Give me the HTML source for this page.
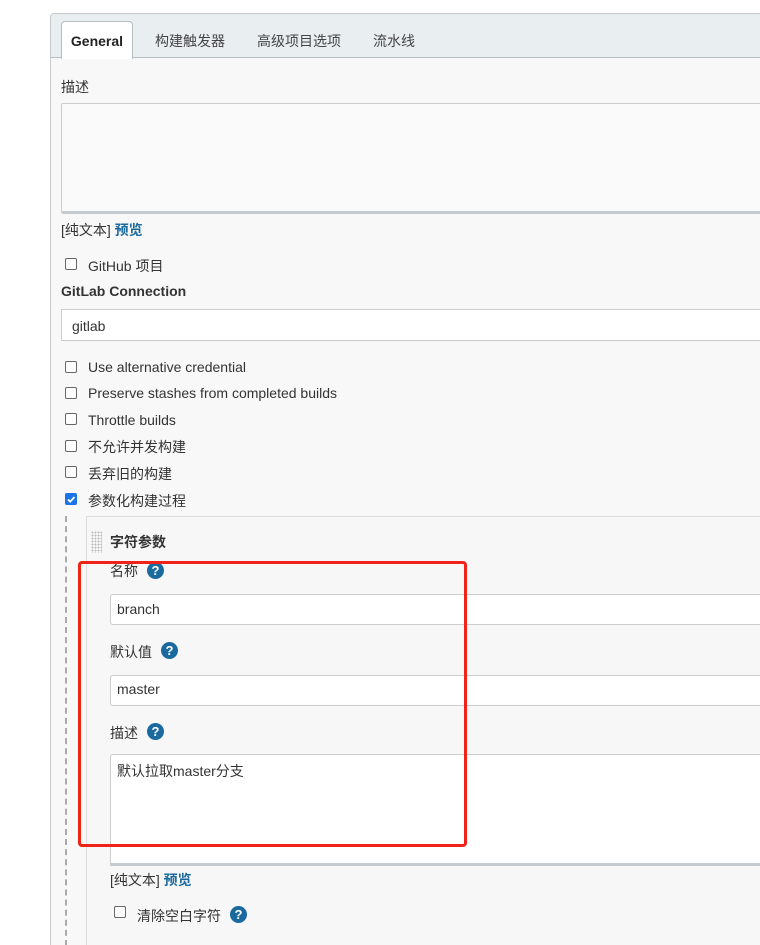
<!DOCTYPE html>
<html><head><meta charset="utf-8"><style>
*{box-sizing:border-box}
html,body{margin:0;width:760px;height:945px;overflow:hidden}
body{position:relative;background:#fff;font-family:"Liberation Sans","Noto Sans CJK SC",sans-serif;font-size:14px;color:#333}
.a{position:absolute}
.panel{position:absolute;left:50px;top:13px;width:740px;height:960px;border:1px solid #c8c8c8;border-radius:4px;background:#f8f8f8}
.tabs{position:absolute;left:0;top:0;right:0;height:44px;background:#e9eef1;border-bottom:1px solid #b8bcc0;border-radius:4px 4px 0 0}
.tab{position:absolute;top:17px;font-size:14px;color:#444}
.tabA{position:absolute;left:10px;top:7px;width:72px;height:38px;background:#fff;border:1px solid #b8bcc0;border-bottom:none;border-radius:4px 4px 0 0;font-weight:bold;text-align:center;line-height:38px;color:#222;font-size:14px}
.cb{position:absolute;width:12px;height:12px;border:1px solid #666;border-radius:2px;background:#fff}
.cb.on{background:#1a73e8;border-color:#1a73e8}
.lbl{position:absolute;font-size:14px;color:#333;white-space:nowrap}
.inp{position:absolute;background:#fff;border:1px solid #ccc;border-radius:3px}
.h{position:absolute;width:17px;height:17px;border-radius:50%;background:#1a6aa0;color:#fff;font-weight:bold;font-size:13px;text-align:center;line-height:17px}
.blue{color:#1a6aa0;font-weight:bold}
</style></head><body>
<div class="panel"><div class="tabs"></div><div class="tabA">General</div>
<div class="tab" style="left:104px">构建触发器</div><div class="tab" style="left:206px">高级项目选项</div><div class="tab" style="left:322px">流水线</div></div>
<div class="lbl" style="left:61px;top:77px">描述</div>
<div class="inp" style="left:61px;top:103px;width:710px;height:111px;background:#fafafa;border-radius:2px;border-bottom:3px solid #c6cbcf"></div>
<div class="lbl" style="left:61px;top:220px">[纯文本] <span class="blue">预览</span></div>
<div class="cb" style="left:65px;top:258px"></div><div class="lbl" style="left:88px;top:256px">GitHub 项目</div>
<div class="lbl" style="left:61px;top:283px;font-weight:bold">GitLab Connection</div>
<div class="inp" style="left:61px;top:309px;width:710px;height:32px;border-radius:0"></div>
<div class="lbl" style="left:72px;top:318px">gitlab</div>
<div class="cb" style="left:65px;top:361px"></div><div class="lbl" style="left:88px;top:359px">Use alternative credential</div>
<div class="cb" style="left:65px;top:387px"></div><div class="lbl" style="left:88px;top:385px">Preserve stashes from completed builds</div>
<div class="cb" style="left:65px;top:413px"></div><div class="lbl" style="left:88px;top:412px">Throttle builds</div>
<div class="cb" style="left:65px;top:440px"></div><div class="lbl" style="left:88px;top:437px">不允许并发构建</div>
<div class="cb" style="left:65px;top:466px"></div><div class="lbl" style="left:88px;top:464px">丢弃旧的构建</div>
<div class="cb on" style="left:65px;top:493px"><svg width="12" height="12" style="position:absolute;left:-1px;top:-1px"><path d="M3 6.5l2.2 2.2L9.5 4" stroke="#fff" stroke-width="1.8" fill="none"/></svg></div><div class="lbl" style="left:88px;top:491px">参数化构建过程</div>
<div class="a" style="left:65px;top:516px;height:430px;border-left:2px dashed #aaa"></div>
<div class="a" style="left:86px;top:516px;width:700px;height:440px;border-left:1px solid #ddd;border-top:1px solid #ddd;background:#f7f7f7"></div>
<div class="a" style="left:91px;top:531px;width:11px;height:22px;background-image:radial-gradient(#bbb 0.8px,transparent 0.9px);background-size:3px 3px"></div>
<div class="lbl" style="left:110px;top:532px;font-weight:bold">字符参数</div>
<div class="lbl" style="left:110px;top:561px">名称</div><div class="h" style="left:147px;top:562px">?</div>
<div class="inp" style="left:110px;top:594px;width:670px;height:31px"></div><div class="lbl" style="left:117px;top:601px">branch</div>
<div class="lbl" style="left:110px;top:642px">默认值</div><div class="h" style="left:161px;top:642px">?</div>
<div class="inp" style="left:110px;top:675px;width:670px;height:31px"></div><div class="lbl" style="left:117px;top:681px">master</div>
<div class="lbl" style="left:110px;top:723px">描述</div><div class="h" style="left:147px;top:723px">?</div>
<div class="inp" style="left:110px;top:754px;width:670px;height:112px;border-radius:3px 3px 0 0;border-bottom:3px solid #c6cbcf"></div>
<div class="lbl" style="left:117px;top:761px">默认拉取master分支</div>
<div class="lbl" style="left:110px;top:870px">[纯文本] <span class="blue">预览</span></div>
<div class="cb" style="left:114px;top:906px"></div><div class="lbl" style="left:137px;top:906px">清除空白字符</div><div class="h" style="left:230px;top:906px">?</div>
<div class="a" style="left:78px;top:561px;width:389px;height:286px;border:3px solid #f0231b;border-radius:4px"></div>
</body></html>
